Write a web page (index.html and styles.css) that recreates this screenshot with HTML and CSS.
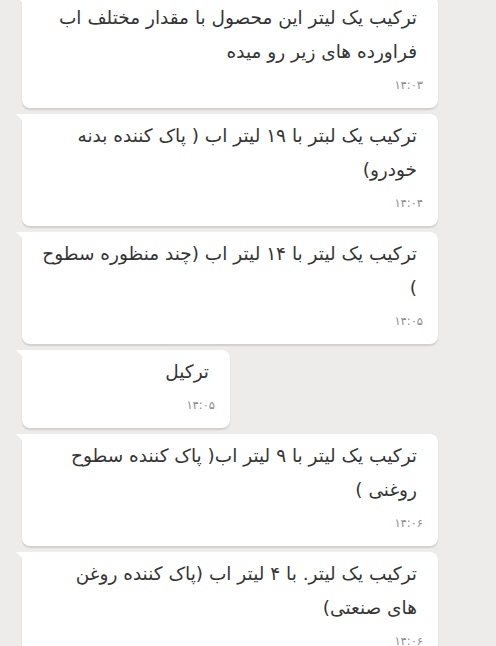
FILE: index.html
```html
<!DOCTYPE html>
<html lang="fa" dir="rtl">
<head>
<meta charset="utf-8">
<link rel="stylesheet" href="styles.css">
</head>
<body>
<div class="chat">
  <div class="msg first">
    <p class="text">ترکیب یک لیتر این محصول با مقدار مختلف اب<br>فراورده های زیر رو میده</p>
    <span class="time">۱۴:۰۳</span>
  </div>
  <div class="msg">
    <p class="text">ترکیب یک لبتر با ۱۹ لیتر اب ( پاک کننده بدنه<br>خودرو)</p>
    <span class="time">۱۴:۰۴</span>
  </div>
  <div class="msg">
    <p class="text">ترکیب یک لیتر با ۱۴ لیتر اب (چند منظوره سطوح<br>)</p>
    <span class="time">۱۴:۰۵</span>
  </div>
  <div class="msg short">
    <p class="text">ترکیل</p>
    <span class="time">۱۴:۰۵</span>
  </div>
  <div class="msg">
    <p class="text">ترکیب یک لیتر با ۹ لیتر اب( پاک کننده سطوح<br>روغنی )</p>
    <span class="time">۱۴:۰۶</span>
  </div>
  <div class="msg">
    <p class="text">ترکیب یک لیتر. با ۴ لیتر اب (پاک کننده روغن<br>های صنعتی)</p>
    <span class="time">۱۴:۰۶</span>
  </div>
</div>
</body>
</html>
```

FILE: styles.css
```css
html, body {
  margin: 0;
  padding: 0;
}
body {
  width: 496px;
  height: 646px;
  overflow: hidden;
  background: #eeecea;
  font-family: "DejaVu Sans", "Noto Sans", sans-serif;
}
.chat {
  display: flex;
  flex-direction: column;
  align-items: flex-end;
  gap: 6px;
  padding: 0 0 0 22px;
  margin-top: -4px;
}
.msg {
  position: relative;
  width: 416px;
  box-sizing: border-box;
  background: #ffffff;
  border-radius: 8px;
  padding: 5px 21px 7px 19px;
  box-shadow: 0 1.5px 1.5px rgba(0, 0, 0, 0.12);
  display: flex;
  flex-direction: column;
}
.msg::before {
  content: "";
  position: absolute;
  top: 0;
  left: -6px;
  width: 12px;
  height: 12px;
  background: #ffffff;
  clip-path: polygon(0 0, 100% 0, 100% 100%);
}
.msg.short {
  width: 208px;
}
.text {
  margin: 0;
  font-size: 18.5px;
  line-height: 34px;
  color: #353535;
  white-space: nowrap;
}
.time {
  align-self: flex-start;
  margin-right: -6px;
  font-size: 11.5px;
  line-height: 32px;
  color: #8d8d8d;
}
```
